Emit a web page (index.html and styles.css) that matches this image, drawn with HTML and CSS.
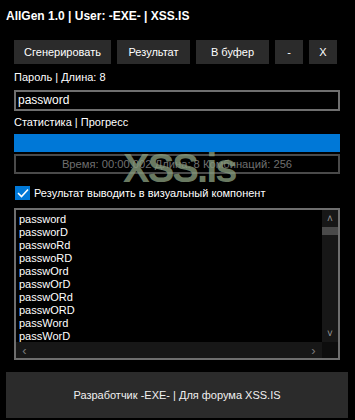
FILE: index.html
```html
<!DOCTYPE html>
<html>
<head>
    <title>AllGen 1.0</title>
    <link rel="stylesheet" href="styles.css">
</head>
<body>
    <div class="window">
        <div class="title">AllGen 1.0 | User: -EXE- | XSS.IS</div>
        <div class="toolbar">
            <button class="btn btn-gen">Сгенерировать</button>
            <button class="btn btn-mid">Результат</button>
            <button class="btn btn-mid">В буфер</button>
            <button class="btn btn-small">-</button>
            <button class="btn btn-small">X</button>
        </div>

        <div class="label label-pass">Пароль | Длина: 8</div>
        <div class="input">password</div>

        <div class="label label-stat">Статистика | Прогресс</div>
        <div class="progress"></div>
        <div class="stats">Время: 00:00.002 Длина: 8 Комбинаций: 256</div>

        <label class="check-row">
            <span class="checkbox">
                <svg width="12" height="10" viewBox="0 0 12 10"><path d="M1 5 L4.5 8.5 L11 1.5" fill="none" stroke="#fff" stroke-width="1.6"/></svg>
            </span>
            Результат выводить в визуальный компонент
        </label>

        <div class="listbox">
            <div class="items">
                <div>password</div>
                <div>passworD</div>
                <div>passwoRd</div>
                <div>passwoRD</div>
                <div>passwOrd</div>
                <div>passwOrD</div>
                <div>passwORd</div>
                <div>passwORD</div>
                <div>passWord</div>
                <div>passWorD</div>
            </div>
            <div class="vscroll">
                <span class="arrow">&#708;</span>
                <span class="thumb"></span>
                <span class="track"></span>
                <span class="arrow">&#709;</span>
            </div>
            <div class="hscroll">
                <span class="arrow">&lsaquo;</span>
                <span class="track"></span>
                <span class="arrow">&rsaquo;</span>
            </div>
            <div class="corner"></div>
        </div>

        <div class="footer">Разработчик -EXE- | Для форума XSS.IS</div>

        <div class="watermark">XSS.is</div>
    </div>
</body>
</html>
```

FILE: styles.css
```css
body {
    margin: 0;
    background-color: #000;
    font-family: "Liberation Sans", Arial, sans-serif;
    color: #fff;
}
.window {
    position: relative;
    width: 355px;
    height: 420px;
    box-sizing: border-box;
    display: flex;
    flex-direction: column;
    overflow: hidden;
}
.title {
    font-weight: bold;
    font-size: 12px;
    line-height: 14px;
    padding: 9px 0 0 6px;
    height: 14px;
}
.toolbar {
    display: flex;
    gap: 6px;
    margin: 17px 0 0 14px;
}
.btn {
    height: 24px;
    border: none;
    background-color: #2b2b2b;
    color: #fff;
    font-family: "Liberation Sans", Arial, sans-serif;
    font-size: 11px;
    padding: 0;
}
.btn-gen { width: 97px; }
.btn-mid { width: 73px; }
.btn-small { width: 28px; }
.label {
    font-size: 11px;
    line-height: 14px;
    margin-left: 14px;
}
.label-pass { margin-top: 6px; }
.label-stat { margin-top: 4px; }
.input {
    margin: 6px 0 0 14px;
    width: 326px;
    height: 21px;
    box-sizing: border-box;
    border: 2px solid #6e6e6e;
    font-size: 12px;
    line-height: 17px;
    padding-left: 2px;
}
.progress {
    margin: 5px 0 0 14px;
    width: 326px;
    height: 18px;
    background-color: #0078d7;
}
.stats {
    margin: 2px 0 0 14px;
    width: 326px;
    height: 20px;
    box-sizing: border-box;
    border: 2px solid #4a4a4a;
    color: #6f6f6f;
    font-size: 11.2px;
    line-height: 16px;
    text-align: center;
}
.check-row {
    display: flex;
    align-items: center;
    gap: 4px;
    margin: 12px 0 0 15px;
    height: 14px;
    font-size: 11px;
}
.checkbox {
    width: 15px;
    height: 14px;
    background-color: #0078d7;
    display: flex;
    align-items: center;
    justify-content: center;
}
.listbox {
    margin: 8px 0 0 14px;
    width: 326px;
    height: 152px;
    box-sizing: border-box;
    border: 2px solid #6e6e6e;
    display: grid;
    grid-template-columns: 1fr 16px;
    grid-template-rows: 1fr 16px;
}
.items {
    font-size: 11px;
    line-height: 13px;
    padding: 3px 0 0 3px;
    overflow: hidden;
}
.vscroll,
.hscroll {
    background-color: #171717;
    display: flex;
    color: #9a9a9a;
    font-size: 10px;
}
.vscroll {
    flex-direction: column;
    align-items: stretch;
}
.vscroll .arrow {
    height: 17px;
    text-align: center;
    line-height: 17px;
}
.vscroll .thumb {
    height: 8px;
    background-color: #4a4a4a;
}
.track { flex: 1; }
.hscroll {
    align-items: center;
}
.hscroll .arrow {
    width: 17px;
    text-align: center;
    font-size: 13px;
    color: #7a7a7a;
}
.corner { background-color: #0d0d0d; }
.footer {
    margin: 12px 0 0 6px;
    width: 342px;
    height: 46px;
    background-color: #2b2b2b;
    font-size: 11px;
    line-height: 46px;
    text-align: center;
    color: #f0f0f0;
}
.watermark {
    position: absolute;
    left: 123px;
    top: 150px;
    font-size: 40px;
    line-height: 36px;
    font-weight: bold;
    letter-spacing: -2px;
    color: rgba(135, 155, 125, 0.8);
}
```
